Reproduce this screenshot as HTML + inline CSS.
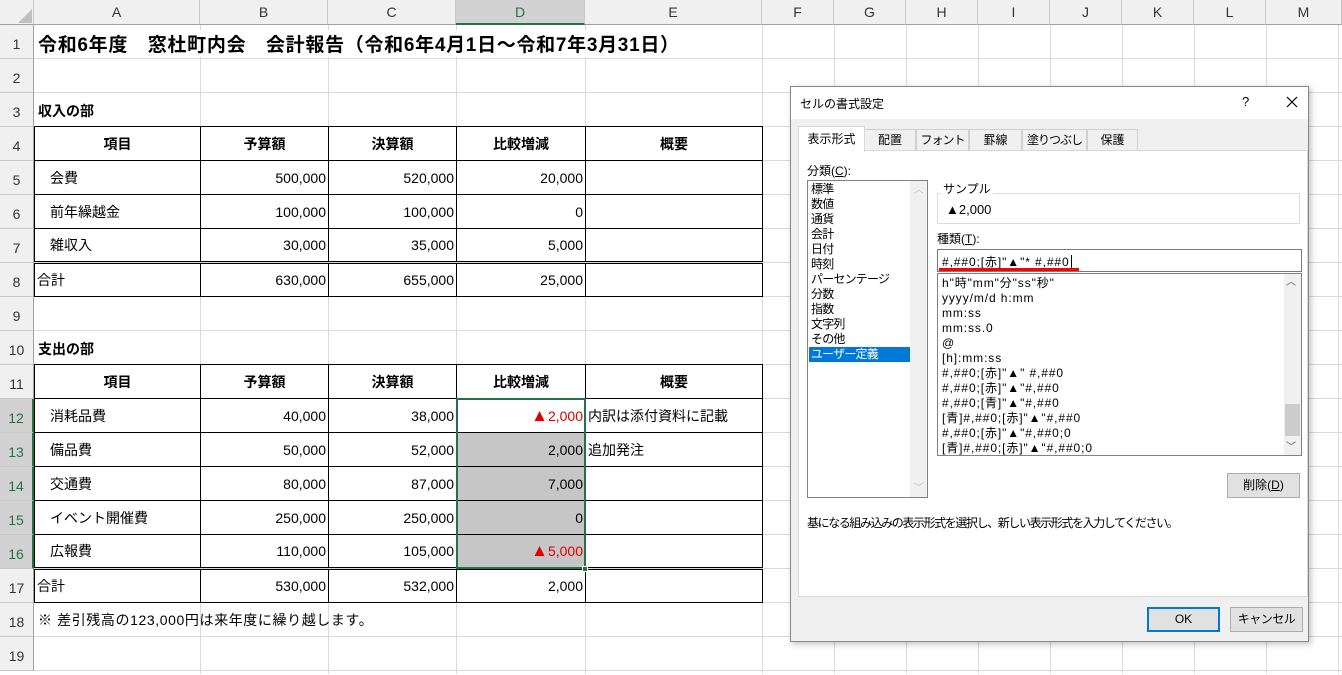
<!DOCTYPE html>
<html><head><meta charset="utf-8">
<style>
*{margin:0;padding:0;box-sizing:border-box}
body{width:1342px;height:674px;overflow:hidden;background:#fff;position:relative;font-family:"Liberation Sans","Noto Sans CJK JP",sans-serif;color:#000}
.a{position:absolute}
.hl{position:absolute;left:34px;width:1308px;height:1px;background:#dadada}
.vl{position:absolute;top:25px;width:1px;height:649px;background:#dadada}
.ch{position:absolute;top:0;height:25px;background:#f0f0f0;border-right:1px solid #c8c8c8;border-bottom:1px solid #a0a0a0;font-size:14px;text-align:center;line-height:25px;color:#333}
.rh{position:absolute;left:0;width:34px;height:34px;background:#f0f0f0;border-bottom:1px solid #c8c8c8;border-right:1px solid #a0a0a0;font-size:14px;text-align:center;line-height:38px;color:#333}
table.t{position:absolute;left:34px;border-collapse:collapse;font-size:14px}
table.t td{border:1px solid #000;height:34px;padding:0 2px}
.c{text-align:center;font-weight:bold}
.r{text-align:right}
.ind{padding-left:15px!important}
.dbl td{border-top:3px double #000!important}
.red{color:#e00000}
.tri{font-size:17px}
.g{background:#c6c6c6}
.dlg{font-size:12px}
.fm{letter-spacing:0.9px}
</style></head><body>
<div class="ch" style="left:0;width:34px;background:#f0f0f0"></div>
<svg class="a" style="left:18px;top:9px" width="14" height="14"><polygon points="14,0 14,14 0,14" fill="#c0c0c0"/></svg>
<div class="ch" style="left:34px;width:166px">A</div>
<div class="ch" style="left:200px;width:128px">B</div>
<div class="ch" style="left:328px;width:128px">C</div>
<div class="ch" style="left:456px;width:129px;background:#d2d2d2;border-bottom:2px solid #217346;color:#217346">D</div>
<div class="ch" style="left:585px;width:177px">E</div>
<div class="ch" style="left:762px;width:72px">F</div>
<div class="ch" style="left:834px;width:72px">G</div>
<div class="ch" style="left:906px;width:72px">H</div>
<div class="ch" style="left:978px;width:72px">I</div>
<div class="ch" style="left:1050px;width:72px">J</div>
<div class="ch" style="left:1122px;width:72px">K</div>
<div class="ch" style="left:1194px;width:72px">L</div>
<div class="ch" style="left:1266px;width:76px">M</div>
<div class="rh" style="top:25px">1</div>
<div class="rh" style="top:59px">2</div>
<div class="rh" style="top:93px">3</div>
<div class="rh" style="top:127px">4</div>
<div class="rh" style="top:161px">5</div>
<div class="rh" style="top:195px">6</div>
<div class="rh" style="top:229px">7</div>
<div class="rh" style="top:263px">8</div>
<div class="rh" style="top:297px">9</div>
<div class="rh" style="top:331px">10</div>
<div class="rh" style="top:365px">11</div>
<div class="rh" style="top:399px;background:#d2d2d2;color:#217346;border-right:2px solid #217346">12</div>
<div class="rh" style="top:433px;background:#d2d2d2;color:#217346;border-right:2px solid #217346">13</div>
<div class="rh" style="top:467px;background:#d2d2d2;color:#217346;border-right:2px solid #217346">14</div>
<div class="rh" style="top:501px;background:#d2d2d2;color:#217346;border-right:2px solid #217346">15</div>
<div class="rh" style="top:535px;background:#d2d2d2;color:#217346;border-right:2px solid #217346">16</div>
<div class="rh" style="top:569px">17</div>
<div class="rh" style="top:603px">18</div>
<div class="rh" style="top:637px">19</div>
<div class="hl" style="top:58px"></div><div class="hl" style="top:92px"></div><div class="hl" style="top:126px"></div>
<div class="hl" style="top:330px"></div><div class="hl" style="top:364px"></div><div class="hl" style="top:636px"></div><div class="hl" style="top:670px"></div>
<div class="hl" style="top:160px"></div><div class="hl" style="top:194px"></div><div class="hl" style="top:228px"></div><div class="hl" style="top:262px"></div><div class="hl" style="top:296px"></div>
<div class="hl" style="top:398px"></div><div class="hl" style="top:432px"></div><div class="hl" style="top:466px"></div><div class="hl" style="top:500px"></div><div class="hl" style="top:534px"></div><div class="hl" style="top:568px"></div><div class="hl" style="top:602px"></div>
<div class="vl" style="left:200px"></div><div class="vl" style="left:328px"></div><div class="vl" style="left:456px"></div><div class="vl" style="left:585px"></div><div class="vl" style="left:762px"></div><div class="vl" style="left:834px"></div><div class="vl" style="left:906px"></div><div class="vl" style="left:978px"></div><div class="vl" style="left:1050px"></div><div class="vl" style="left:1122px"></div><div class="vl" style="left:1194px"></div><div class="vl" style="left:1266px"></div><div class="vl" style="left:1338px"></div>
<div class="a" style="left:38px;top:30px;font-size:19px;letter-spacing:0.7px;font-weight:bold;white-space:nowrap;background:#fff;width:724px;height:27px">令和6年度　窓杜町内会　会計報告（令和6年4月1日～令和7年3月31日）</div>
<div class="a" style="left:38px;top:101px;font-size:14px;font-weight:bold">収入の部</div>
<div class="a" style="left:38px;top:339px;font-size:14px;font-weight:bold">支出の部</div>
<table class="t" style="top:126px">
<colgroup><col style="width:166px"><col style="width:128px"><col style="width:128px"><col style="width:129px"><col style="width:177px"></colgroup>
<tr><td class="c">項目</td><td class="c">予算額</td><td class="c">決算額</td><td class="c">比較増減</td><td class="c">概要</td></tr>
<tr><td class="ind">会費</td><td class="r">500,000</td><td class="r">520,000</td><td class="r">20,000</td><td></td></tr>
<tr><td class="ind">前年繰越金</td><td class="r">100,000</td><td class="r">100,000</td><td class="r">0</td><td></td></tr>
<tr><td class="ind">雑収入</td><td class="r">30,000</td><td class="r">35,000</td><td class="r">5,000</td><td></td></tr>
<tr class="dbl"><td>合計</td><td class="r">630,000</td><td class="r">655,000</td><td class="r">25,000</td><td></td></tr>
</table>
<table class="t" style="top:364px">
<colgroup><col style="width:166px"><col style="width:128px"><col style="width:128px"><col style="width:129px"><col style="width:177px"></colgroup>
<tr><td class="c">項目</td><td class="c">予算額</td><td class="c">決算額</td><td class="c">比較増減</td><td class="c">概要</td></tr>
<tr><td class="ind">消耗品費</td><td class="r">40,000</td><td class="r">38,000</td><td class="r red"><span class="tri">▲</span>2,000</td><td>内訳は添付資料に記載</td></tr>
<tr><td class="ind">備品費</td><td class="r">50,000</td><td class="r">52,000</td><td class="r g">2,000</td><td>追加発注</td></tr>
<tr><td class="ind">交通費</td><td class="r">80,000</td><td class="r">87,000</td><td class="r g">7,000</td><td></td></tr>
<tr><td class="ind">イベント開催費</td><td class="r">250,000</td><td class="r">250,000</td><td class="r g">0</td><td></td></tr>
<tr><td class="ind">広報費</td><td class="r">110,000</td><td class="r">105,000</td><td class="r g red"><span class="tri">▲</span>5,000</td><td></td></tr>
<tr class="dbl"><td>合計</td><td class="r">530,000</td><td class="r">532,000</td><td class="r">2,000</td><td></td></tr>
</table>
<div class="a" style="left:456px;top:398px;width:130px;height:171px;border:2px solid #217346"></div>
<div class="a" style="left:582px;top:566px;width:6px;height:6px;background:#217346;border:1px solid #fff"></div>
<div class="a" style="left:38px;top:610px;font-size:14px;letter-spacing:0.6px;white-space:nowrap">※ 差引残高の123,000円は来年度に繰り越します。</div>

<div class="a dlg" style="left:790px;top:86px;width:519px;height:556px;background:#f0f0f0;border:1px solid #888;box-shadow:2px 2px 6px rgba(0,0,0,.25)">
 <div class="a" style="left:0;top:0;width:517px;height:32px;background:#fff"></div>
 <div class="a" style="left:9px;top:8px">セルの書式設定</div>
 <div class="a" style="left:451px;top:7px;font-size:13px">?</div>
 <svg class="a" style="left:495px;top:9px" width="12" height="12"><path d="M1 1L11 11M11 1L1 11" stroke="#000" stroke-width="1.2"/></svg>
 <div class="a" style="left:73px;top:42px;width:52px;height:22px;border:1px solid #d0d0d0;background:#f0f0f0;text-align:center;line-height:20px">配置</div>
 <div class="a" style="left:125px;top:42px;width:53px;height:22px;border:1px solid #d0d0d0;background:#f0f0f0;text-align:center;line-height:20px;letter-spacing:-1px">フォント</div>
 <div class="a" style="left:178px;top:42px;width:53px;height:22px;border:1px solid #d0d0d0;background:#f0f0f0;text-align:center;line-height:20px">罫線</div>
 <div class="a" style="left:231px;top:42px;width:65px;height:22px;border:1px solid #d0d0d0;background:#f0f0f0;text-align:center;line-height:20px;letter-spacing:-1px">塗りつぶし</div>
 <div class="a" style="left:296px;top:42px;width:51px;height:22px;border:1px solid #d0d0d0;background:#f0f0f0;text-align:center;line-height:20px">保護</div>
 <div class="a" style="left:7px;top:63px;width:510px;height:447px;background:#fff;border:1px solid #d9d9d9"></div>
 <div class="a" style="left:7px;top:39px;width:67px;height:26px;background:#fff;border:1px solid #d9d9d9;border-bottom:none;text-align:center;line-height:24px">表示形式</div>
 <div class="a" style="left:16px;top:75px">分類(<u>C</u>):</div>
 <div class="a" style="left:16px;top:93px;width:121px;height:318px;border:1px solid #828282;background:#fff;line-height:15px;font-size:12px;letter-spacing:-0.8px">
  <div style="padding-left:3px;padding-top:1px">標準<br>数値<br>通貨<br>会計<br>日付<br>時刻<br>パーセンテージ<br>分数<br>指数<br>文字列<br>その他</div>
  <div style="margin-left:1px;width:101px;background:#0078d7;color:#fff;padding-left:2px">ユーザー定義</div>
  <div class="a" style="right:0;top:0;width:17px;height:316px;background:#f0f0f0"></div>
  <div class="a" style="right:4px;top:2px;color:#bbb;font-size:10px">︿</div>
  <div class="a" style="right:4px;top:300px;color:#bbb;font-size:10px">﹀</div>
 </div>
 <div class="a" style="left:146px;top:106px;width:363px;height:31px;border:1px solid #dcdcdc"></div>
 <div class="a" style="left:150px;top:93px;background:#fff;padding:0 2px">サンプル</div>
 <div class="a" style="left:155px;top:115px;font-size:13px">▲2,000</div>
 <div class="a" style="left:146px;top:143px">種類(<u>T</u>):</div>
 <div class="a fm" style="left:146px;top:162px;width:365px;height:23px;border:1px solid #7a7a7a;background:#fff;padding:3px 4px;white-space:nowrap">#,##0;[赤]"▲"* #,##0<span style="border-left:1px solid #000;margin-left:1px"></span></div>
 <div class="a" style="left:148px;top:181px;width:140px;height:3px;background:#ff0000"></div>
 <div class="a fm" style="left:146px;top:186px;width:365px;height:183px;border:1px solid #828282;background:#fff;line-height:15px;padding:2px 0 0 4px;white-space:nowrap">
h"時"mm"分"ss"秒"<br>yyyy/m/d h:mm<br>mm:ss<br>mm:ss.0<br>@<br>[h]:mm:ss<br>#,##0;[赤]"▲" #,##0<br>#,##0;[赤]"▲"#,##0<br>#,##0;[青]"▲"#,##0<br>[青]#,##0;[赤]"▲"#,##0<br>#,##0;[赤]"▲"#,##0;0<br>[青]#,##0;[赤]"▲"#,##0;0
  <div class="a" style="right:0;top:0;width:17px;height:181px;background:#f0f0f0"></div>
  <div class="a" style="right:1px;top:130px;width:15px;height:32px;background:#cdcdcd"></div>
  <div class="a" style="right:4px;top:1px;font-size:10px;color:#555">︿</div>
  <div class="a" style="right:4px;top:166px;font-size:10px;color:#555">﹀</div>
 </div>
 <div class="a" style="left:436px;top:386px;width:73px;height:25px;border:1px solid #adadad;background:#e1e1e1;text-align:center;line-height:23px">削除(<u>D</u>)</div>
 <div class="a" style="left:16px;top:427px;white-space:nowrap;letter-spacing:-1.4px">基になる組み込みの表示形式を選択し、新しい表示形式を入力してください。</div>
 <div class="a" style="left:356px;top:520px;width:73px;height:25px;border:2px solid #0078d7;background:#e1e1e1;text-align:center;line-height:21px">OK</div>
 <div class="a" style="left:439px;top:520px;width:73px;height:25px;border:1px solid #adadad;background:#e1e1e1;text-align:center;line-height:23px;letter-spacing:-0.5px">キャンセル</div>
</div>
</body></html>
